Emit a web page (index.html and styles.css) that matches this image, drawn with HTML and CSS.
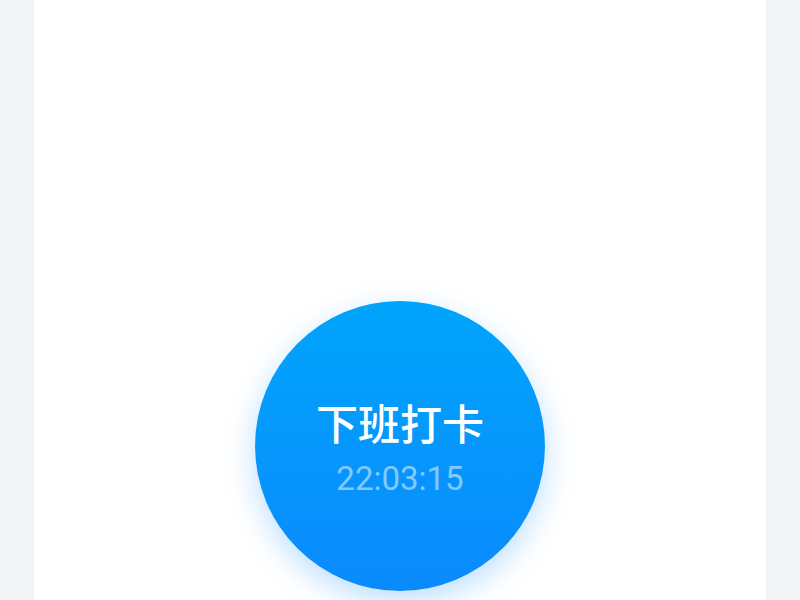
FILE: index.html
```html
<!DOCTYPE html>
<html lang="zh">
<head>
<meta charset="utf-8">
<link rel="stylesheet" href="styles.css">
</head>
<body>
<div class="page">
  <main class="panel">
    <button class="punch">
      <span class="punch-title">下班打卡</span>
      <span class="punch-time">22:03:15</span>
    </button>
  </main>
</div>
</body>
</html>
```

FILE: styles.css
```css
* { box-sizing: border-box; }
html, body { margin: 0; padding: 0; }
body {
  background: #f3f4f6;
  font-family: Roboto, "Noto Sans CJK SC", sans-serif;
}
.page {
  width: 800px;
  height: 600px;
  display: flex;
  justify-content: center;
  overflow: hidden;
}
.panel {
  width: 732px;
  height: 600px;
  background: #ffffff;
  display: flex;
  flex-direction: column;
  align-items: center;
  padding-top: 301px;
}
.punch {
  width: 290px;
  height: 290px;
  flex: none;
  border: none;
  border-radius: 50%;
  background: linear-gradient(180deg, #00a5fb 0%, #0a8afd 100%);
  box-shadow: 0 10px 30px rgba(10, 140, 253, 0.28);
  display: flex;
  flex-direction: column;
  align-items: center;
  justify-content: center;
  padding: 0;
  color: #ffffff;
  font-family: inherit;
}
.punch-title {
  font-family: "Noto Sans CJK SC", sans-serif;
  font-size: 42px;
  line-height: 52px;
  font-weight: 500;
  margin-top: 3px;
}
.punch-time {
  font-size: 33px;
  line-height: 40px;
  color: rgba(255, 255, 255, 0.5);
  margin-top: 11px;
}
```
